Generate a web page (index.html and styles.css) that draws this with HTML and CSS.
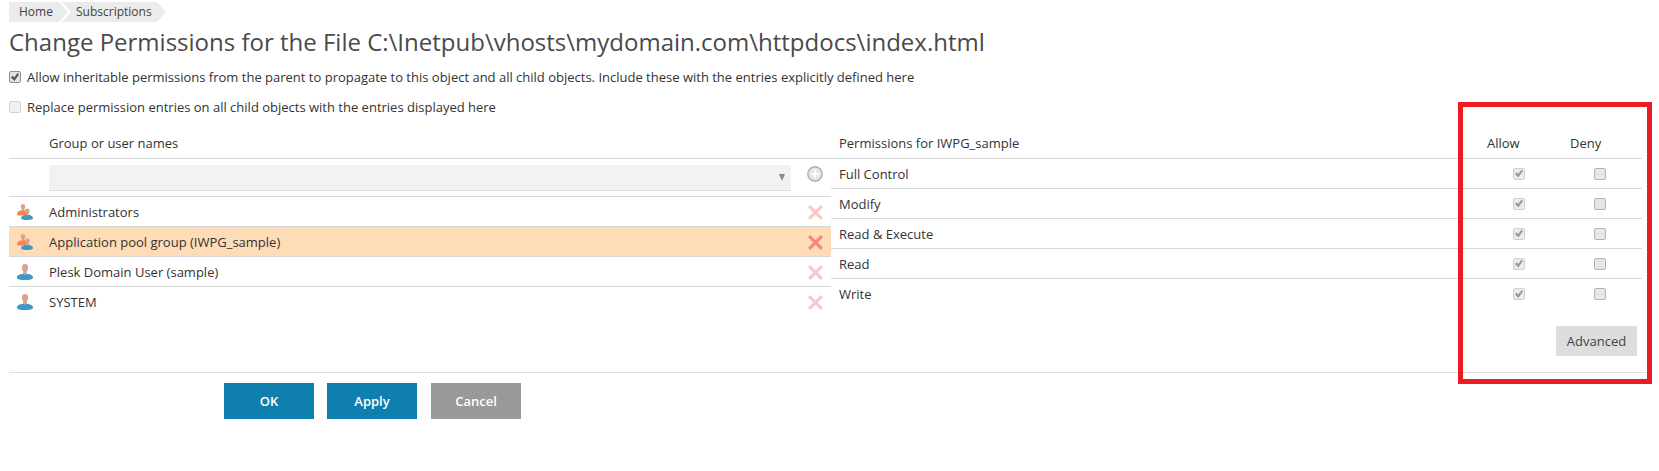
FILE: index.html
```html
<!DOCTYPE html>
<html lang="en">
<head>
<meta charset="utf-8">
<title>Change Permissions</title>
<link rel="stylesheet" href="styles.css">
</head>
<body>
<svg class="defs" width="0" height="0" aria-hidden="true">
  <defs>
    <symbol id="user" viewBox="0 0 16 16">
      <path fill="#d8a58c" d="M4.900 3.200C4.900 1 6.300 0 8 0s3.100 1 3.100 3.200c0 1.800-.6 3.300-1.300 4.200v3.100H6.200V7.400c-.7-.9-1.300-2.400-1.300-4.200z"/>
      <path fill="#3f98c6" d="M6 9.800c.6.800 3.400.800 4 0 3.200.5 6 1.500 6 3.600 0 2-3.600 2.600-8 2.600s-8-.6-8-2.600c0-2.100 2.800-3.100 6-3.600z"/>
    </symbol>
    <symbol id="group" viewBox="0 0 16 16">
      <path fill="#d8a58c" d="M3.800 2.200C3.800.7 4.800 0 6 0s2.200.7 2.200 2.200c0 1.300-.3 2.300-.9 3v1.500H4.700V5.200c-.6-.7-.9-1.700-.9-3z"/>
      <path fill="#f58549" d="M4.200 6.200c.5.500 3 .500 3.600 0l1.200.3v5H1.800C.6 11.500 0 11 0 10.200 0 8 2.300 6.700 4.200 6.200z"/>
      <path fill="#d8a58c" d="M8 6.600C8 5.200 9 4.400 10.300 4.400s2.300.8 2.300 2.200c0 1.200-.4 2.100-1 2.800v1.800H9V9.400c-.6-.7-1-1.600-1-2.800z"/>
      <path fill="#3f98c6" d="M9 10.800c.5.500 2.100.500 2.600 0C14 11.300 16 12.300 16 14c0 1.500-2.500 2-5.900 2S4 15.500 4 14c0-1.700 2.600-2.700 5-3.200z"/>
    </symbol>
    <symbol id="remove" viewBox="0 0 16 16">
      <path fill="none" stroke="currentColor" stroke-width="3.400" d="M1.200 1.200l13.600 13.600M14.800 1.200L1.200 14.800"/>
    </symbol>
  </defs>
</svg>

<nav class="crumbs">
  <a class="crumb crumb-first">Home</a>
  <a class="crumb crumb-next">Subscriptions</a>
</nav>
<h1 class="title">Change Permissions for the File C:\Inetpub\vhosts\mydomain.com\httpdocs\index.html</h1>

<label class="option"><input class="check check-on" type="checkbox" checked>Allow inheritable permissions from the parent to propagate to this object and all child objects. Include these with the entries explicitly defined here</label>
<label class="option"><input class="check check-faint" type="checkbox">Replace permission entries on all child objects with the entries displayed here</label>

<div class="columns">
  <section class="users">
    <div class="users-head">Group or user names</div>
    <div class="picker">
      <div class="select"><span class="arrow"></span></div>
      <svg class="add" viewBox="0 0 16 16" aria-hidden="true">
        <circle cx="8" cy="8" r="7.200" fill="#dcebdc" stroke="#a9b0a9" stroke-width="1.400"/>
        <path stroke="#fbfefb" stroke-width="2" d="M8 3.800v8.400M3.800 8h8.400"/>
      </svg>
    </div>
    <div class="user"><svg class="avatar"><use href="#group"/></svg><span class="user-name">Administrators</span><svg class="remove"><use href="#remove"/></svg></div>
    <div class="user user-selected"><svg class="avatar"><use href="#group"/></svg><span class="user-name">Application pool group (IWPG_sample)</span><svg class="remove"><use href="#remove"/></svg></div>
    <div class="user"><svg class="avatar"><use href="#user"/></svg><span class="user-name">Plesk Domain User (sample)</span><svg class="remove"><use href="#remove"/></svg></div>
    <div class="user user-last"><svg class="avatar"><use href="#user"/></svg><span class="user-name">SYSTEM</span><svg class="remove"><use href="#remove"/></svg></div>
  </section>

  <section class="perms">
    <div class="perms-head"><span class="perms-title">Permissions for IWPG_sample</span><span>Allow</span><span>Deny</span></div>
    <div class="perm"><span>Full Control</span><input class="check check-off" type="checkbox" checked disabled><input class="check" type="checkbox"></div>
    <div class="perm"><span>Modify</span><input class="check check-off" type="checkbox" checked disabled><input class="check" type="checkbox"></div>
    <div class="perm"><span>Read &amp; Execute</span><input class="check check-off" type="checkbox" checked disabled><input class="check" type="checkbox"></div>
    <div class="perm"><span>Read</span><input class="check check-off" type="checkbox" checked disabled><input class="check" type="checkbox"></div>
    <div class="perm perm-last"><span>Write</span><input class="check check-off" type="checkbox" checked disabled><input class="check" type="checkbox"></div>
    <div class="perms-actions"><button class="btn-advanced" type="button">Advanced</button></div>
  </section>
</div>

<div class="footer">
  <button class="btn btn-primary" type="button">OK</button>
  <button class="btn btn-primary" type="button">Apply</button>
  <button class="btn btn-muted" type="button">Cancel</button>
</div>

<div class="callout"></div>
</body>
</html>
```
FILE: styles.css
```css
* { box-sizing: border-box; }
html, body { margin: 0; padding: 0; }
body {
  position: relative;
  height: 471px;
  overflow: hidden;
  background: #fff;
  color: #333;
  font-family: "Open Sans", sans-serif;
  font-size: 13px;
  line-height: 18px;
}
.defs { position: absolute; }

.crumbs { display: flex; height: 20px; margin: 2px 0 0 9px; color: #444; font-size: 12px; }
.crumb { display: flex; align-items: center; height: 20px; background: #ebebeb; }
.crumb-first {
  width: 59px;
  padding-left: 10px;
  clip-path: polygon(0 0, 50px 0, 59px 50%, 50px 100%, 0 100%);
}
.crumb-next {
  width: 104px;
  margin-left: -6px;
  padding-left: 14px;
  clip-path: polygon(0 0, 95px 0, 104px 50%, 95px 100%, 0 100%, 9px 50%);
}

.title {
  margin: 4px 0 0 9px;
  height: 32px;
  color: #4a4a4a;
  font-size: 24px;
  font-weight: 400;
  line-height: 32px;
  white-space: nowrap;
}

.option { display: flex; align-items: center; gap: 6px; height: 18px; margin: 10px 0 0 9px; }
.option + .option { margin-top: 12px; }

.check {
  appearance: none;
  position: relative;
  flex: none;
  width: 12px;
  height: 12px;
  margin: 0;
  background: #e6e6e6;
  border: 1px solid #b4b4b4;
  border-radius: 2px;
}
.check:checked::after {
  content: "";
  position: absolute;
  inset: 1px;
  background: #555;
  clip-path: polygon(0 55%, 22% 35%, 40% 55%, 82% 0, 100% 18%, 42% 100%);
}
.check-on { background: #e2e2e2; border-color: #8f8f8f; }
.check-faint { background: #f1f1f1; border-color: #d2d2d2; }
.check-off { background: #ececec; border-color: #d0d0d0; }
.check-off:checked::after { background: #9a9a9a; }

.columns { display: grid; grid-template-columns: 822px 811px; margin: 12px 0 0 9px; }

.users-head {
  height: 31px;
  padding: 6px 0 0 40px;
  border-bottom: 1px solid #d8d8d8;
}
.picker { display: flex; height: 38px; padding: 6px 0 0 40px; border-bottom: 1px solid #d8d8d8; }
.select {
  display: flex;
  align-items: center;
  justify-content: flex-end;
  width: 742px;
  height: 26px;
  padding-right: 6px;
  background: #f2f2f2;
  border-bottom: 1px solid #dedede;
}
.arrow {
  width: 0;
  height: 0;
  border-top: 7px solid #8a8a8a;
  border-left: 3.500px solid transparent;
  border-right: 3.500px solid transparent;
}
.add { width: 16px; height: 16px; margin: 1px 0 0 16px; }

.user { display: flex; align-items: center; height: 30px; border-bottom: 1px solid #d8d8d8; }
.user-last { border-bottom: 0; }
.user-selected { background: #fedcb7; }
.avatar { flex: none; width: 16px; height: 16px; margin-left: 8px; }
.user-name { flex: 1; padding-left: 16px; }
.remove { flex: none; width: 15px; height: 15px; margin: 1px 8px 0 0; color: #fdc8c4; }
.user-selected .remove { color: #fd8581; }

.perms-head {
  display: grid;
  grid-template-columns: 1fr 83px 72px;
  height: 31px;
  padding-top: 6px;
  border-bottom: 1px solid #d8d8d8;
}
.perms-title { padding-left: 8px; }

.perm {
  display: grid;
  grid-template-columns: 1fr 81px 48px;
  align-items: center;
  height: 30px;
  padding-left: 8px;
  border-bottom: 1px solid #d8d8d8;
}
.perm-last { border-bottom: 0; }

.perms-actions { display: flex; justify-content: flex-end; padding: 17px 5px 0 0; }
.btn-advanced {
  width: 81px;
  height: 30px;
  padding: 0;
  background: #ddd;
  border: 0;
  color: #444;
  font: inherit;
}

.footer {
  display: flex;
  height: 47px;
  margin: 16px 12px 0 9px;
  padding: 10px 0 0 215px;
  border-top: 1px solid #ddd;
}
.btn {
  width: 90px;
  height: 36px;
  margin-right: 13px;
  padding: 0;
  border: 0;
  color: #fff;
  font: 600 13px/18px "Open Sans", sans-serif;
}
.btn-primary { background: #0f7fb0; }
.btn-muted { margin-left: 1px; background: #999; }

.callout {
  position: absolute;
  top: 102px;
  left: 1458px;
  width: 194px;
  height: 282px;
  border: 5px solid #ed1c24;
}
```
